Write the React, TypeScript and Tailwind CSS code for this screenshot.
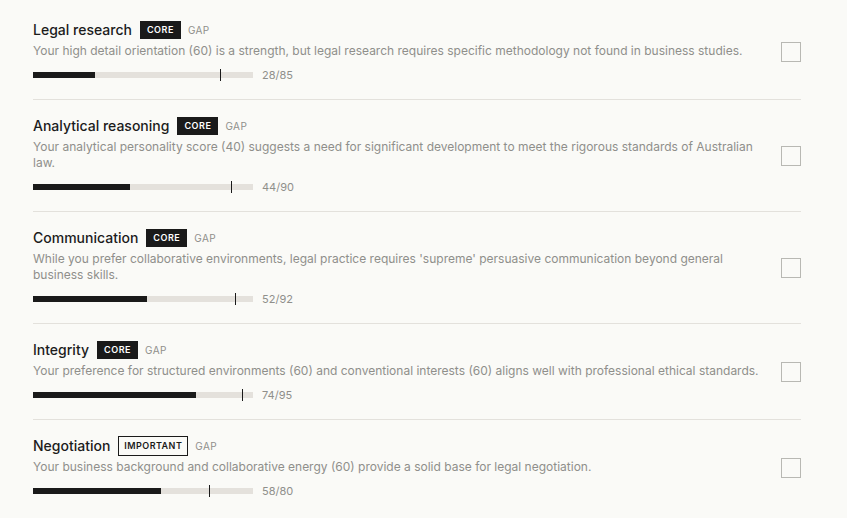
import React from "react";

type Skill = {
  name: string;
  tag: "CORE" | "IMPORTANT";
  text: string;
  score: number;
  target: number;
};

const skills: Skill[] = [
  {
    name: "Legal research",
    tag: "CORE",
    text: "Your high detail orientation (60) is a strength, but legal research requires specific methodology not found in business studies.",
    score: 28,
    target: 85,
  },
  {
    name: "Analytical reasoning",
    tag: "CORE",
    text: "Your analytical personality score (40) suggests a need for significant development to meet the rigorous standards of Australian law.",
    score: 44,
    target: 90,
  },
  {
    name: "Communication",
    tag: "CORE",
    text: "While you prefer collaborative environments, legal practice requires 'supreme' persuasive communication beyond general business skills.",
    score: 52,
    target: 92,
  },
  {
    name: "Integrity",
    tag: "CORE",
    text: "Your preference for structured environments (60) and conventional interests (60) aligns well with professional ethical standards.",
    score: 74,
    target: 95,
  },
  {
    name: "Negotiation",
    tag: "IMPORTANT",
    text: "Your business background and collaborative energy (60) provide a solid base for legal negotiation.",
    score: 58,
    target: 80,
  },
];

function Tag({ kind }: { kind: Skill["tag"] }) {
  if (kind === "CORE") {
    return (
      <span className="inline-flex h-[18px] items-center bg-[#1a1a1a] px-[7px] text-[9px] font-semibold tracking-[0.06em] text-white">
        CORE
      </span>
    );
  }
  return (
    <span className="inline-flex h-[20px] items-center border border-[#1a1a1a] px-[5px] text-[9px] font-semibold tracking-[0.05em] text-[#1a1a1a]">
      IMPORTANT
    </span>
  );
}

function ScoreBar({ score, target }: { score: number; target: number }) {
  return (
    <div className="mt-2 flex h-4 items-center gap-[9px]">
      <div className="relative h-[6px] w-[220px] bg-[#e4e1dc]">
        <div className="h-full bg-[#1a1a1a]" style={{ width: `${score}%` }} />
        <div
          className="absolute top-1/2 h-3 w-px -translate-y-1/2 bg-[#1a1a1a]"
          style={{ left: `${target}%` }}
        />
      </div>
      <span className="text-[11px] text-[#8f8f8b]">
        {score}/{target}
      </span>
    </div>
  );
}

export default function App() {
  return (
    <div
      className="min-h-[518px] bg-[#fafaf7] pl-[33px] pt-[4px]"
      style={{ fontFamily: "Inter, 'Noto Sans', sans-serif" }}
    >
      <div className="w-[768px]">
        {skills.map((s, i) => (
          <div
            key={s.name}
            className={`flex items-center gap-4 py-4 ${
              i < skills.length - 1 ? "border-b border-[#e3e1dc]" : ""
            }`}
          >
            <div className="min-w-0 flex-1">
              <div className="flex h-5 items-center gap-2">
                <span className="text-[14px] font-medium leading-5 text-[#1c1c1c]">
                  {s.name}
                </span>
                <Tag kind={s.tag} />
                <span className="-ml-px text-[10px] tracking-[0.04em] text-[#8f8f8b]">GAP</span>
              </div>
              <p className="mt-[3px] text-[12px] leading-4 text-[#8f8f8b]">{s.text}</p>
              <ScoreBar score={s.score} target={s.target} />
            </div>
            <div className="h-5 w-5 shrink-0 border border-[#b8b8b3] bg-[#fafaf7]" />
          </div>
        ))}
      </div>
    </div>
  );
}
